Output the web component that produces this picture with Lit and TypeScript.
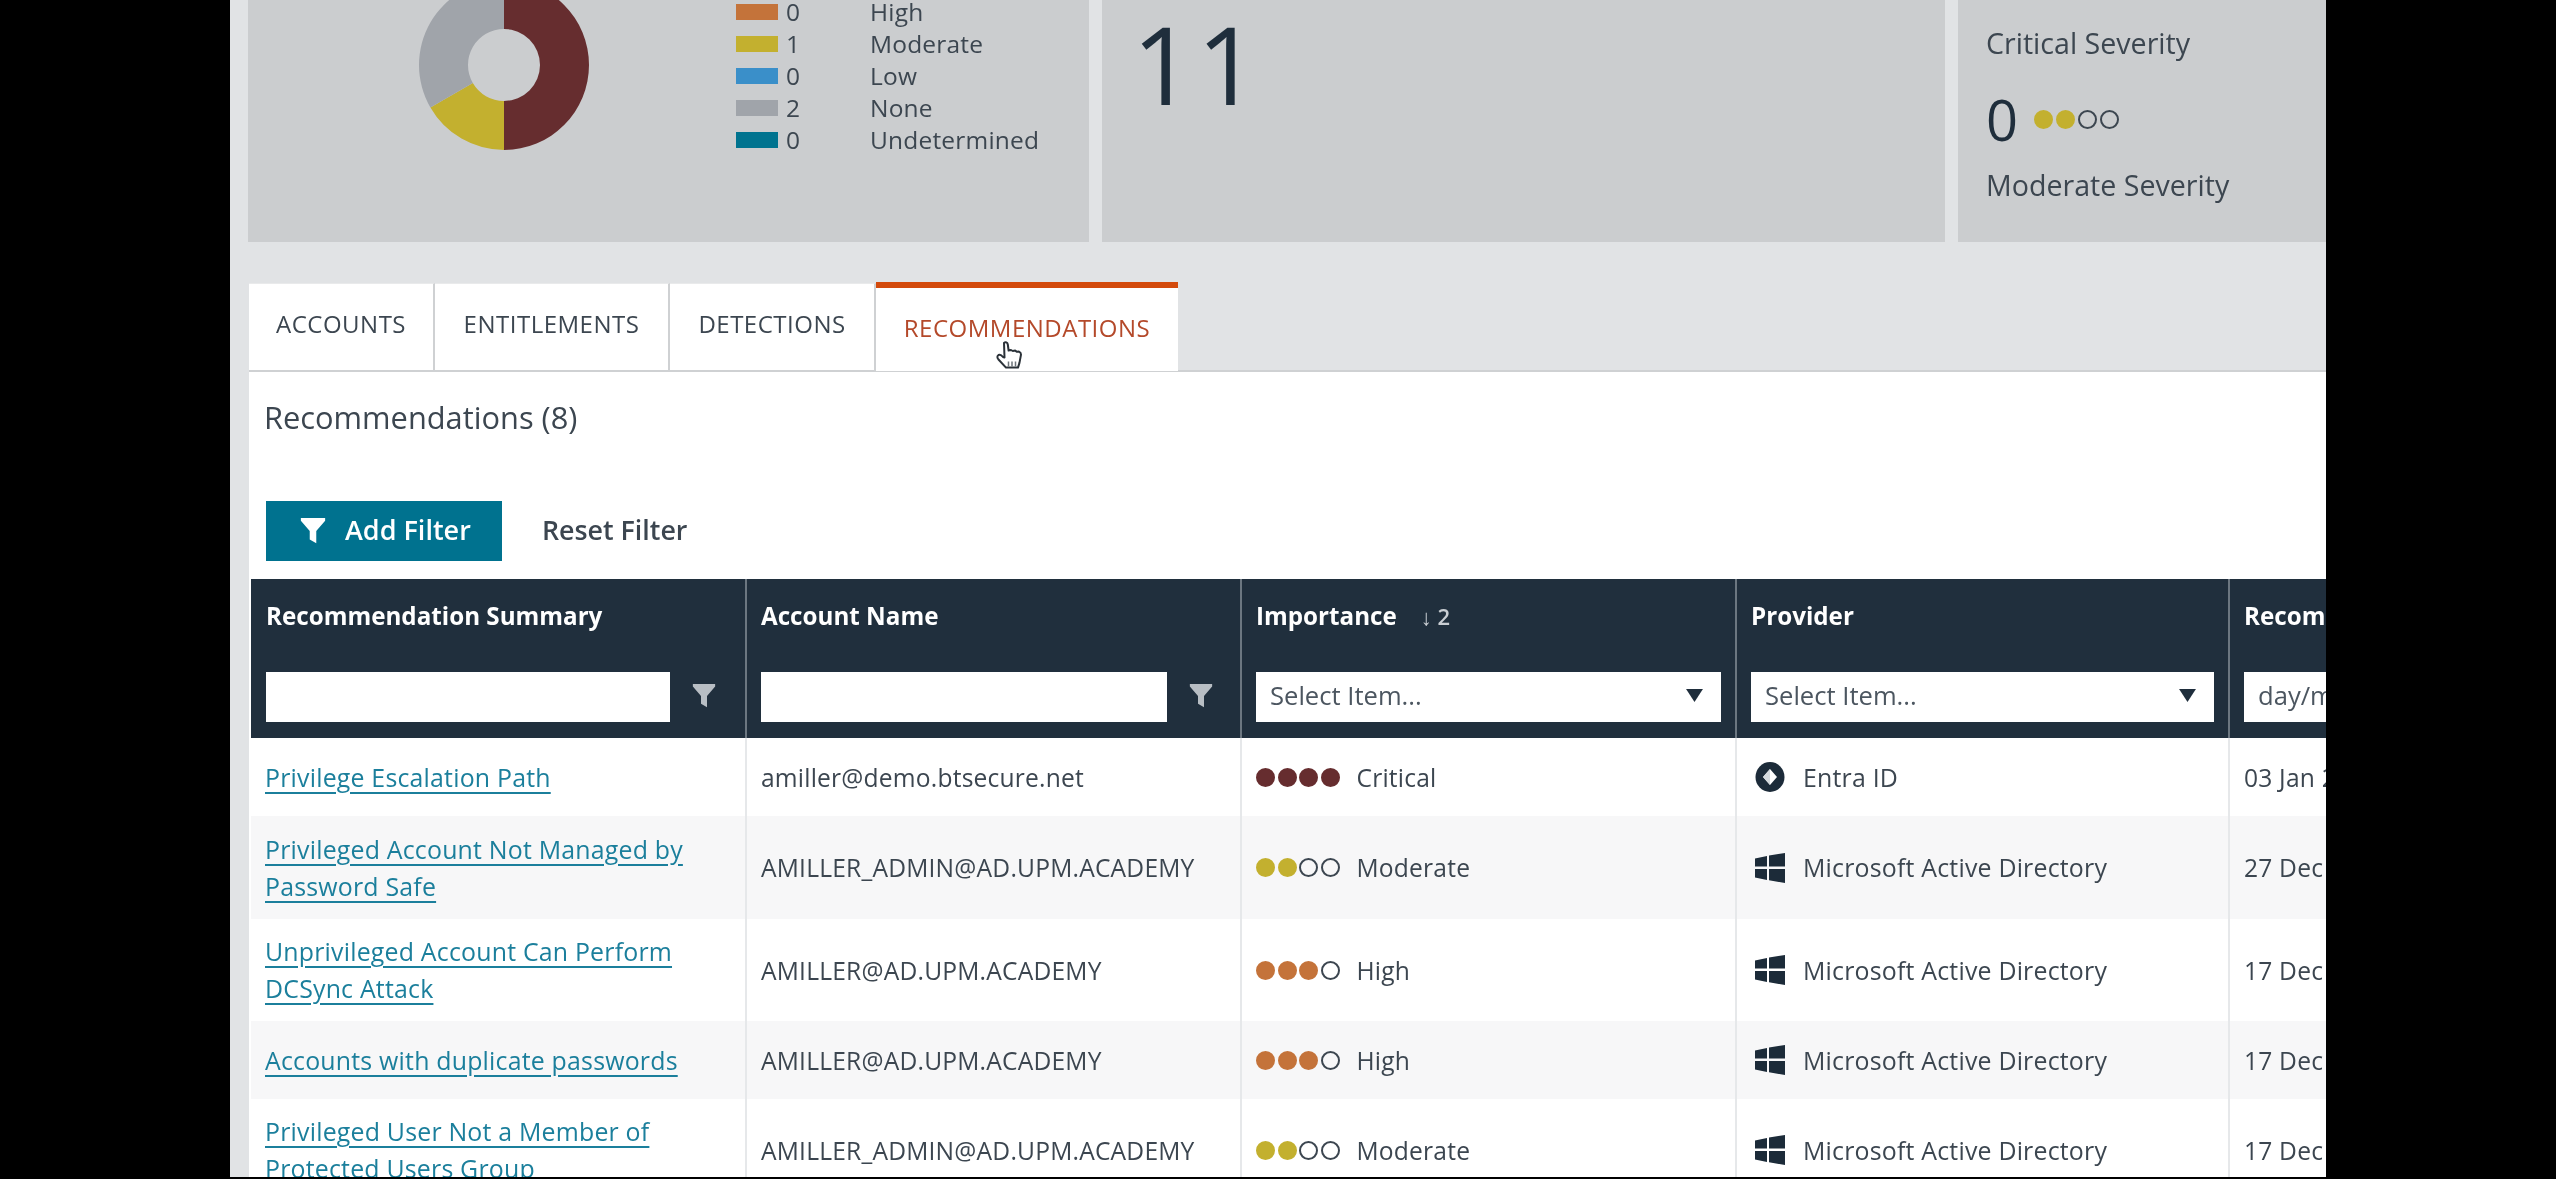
import { LitElement, html, css, svg } from "lit";
import { customElement } from "lit/decorators.js";

type Sev = "critical" | "high" | "moderate";
const SEV: Record<Sev, { n: number; label: string }> = {
  critical: { n: 4, label: "Critical" },
  high: { n: 3, label: "High" },
  moderate: { n: 2, label: "Moderate" },
};

const LEGEND = [
  { c: "#c4733a", n: 0, l: "High" },
  { c: "#c3b02f", n: 1, l: "Moderate" },
  { c: "#3a8fc9", n: 0, l: "Low" },
  { c: "#a0a4aa", n: 2, l: "None" },
  { c: "#00738f", n: 0, l: "Undetermined" },
];

const ROWS: { link: string[]; acct: string; sev: Sev; entra?: boolean; prov: string; date: string }[] = [
  { link: ["Privilege Escalation Path"], acct: "amiller@demo.btsecure.net", sev: "critical", entra: true, prov: "Entra ID", date: "03 Jan 2024" },
  { link: ["Privileged Account Not Managed by", "Password Safe"], acct: "AMILLER_ADMIN@AD.UPM.ACADEMY", sev: "moderate", prov: "Microsoft Active Directory", date: "27 Dec 2023" },
  { link: ["Unprivileged Account Can Perform", "DCSync Attack"], acct: "AMILLER@AD.UPM.ACADEMY", sev: "high", prov: "Microsoft Active Directory", date: "17 Dec 2023" },
  { link: ["Accounts with duplicate passwords"], acct: "AMILLER@AD.UPM.ACADEMY", sev: "high", prov: "Microsoft Active Directory", date: "17 Dec 2023" },
  { link: ["Privileged User Not a Member of", "Protected Users Group"], acct: "AMILLER_ADMIN@AD.UPM.ACADEMY", sev: "moderate", prov: "Microsoft Active Directory", date: "17 Dec 2023" },
];

const funnel = (cls: string) => html`<svg class=${cls} viewBox="0 0 28 30"><path d="M1 1h26v3L17.500 15v13l-7-4V15L1 4z" fill="currentColor"/></svg>`;
const caret = html`<svg class="caret" viewBox="0 0 20 16"><path d="M1 1h18L10 15z" fill="#1f2e3c"/></svg>`;
const win = html`<svg class="pico" viewBox="0 0 30 30"><path d="M0 5.500l12-2.500v10.500H0zM14 2.500L30 0v13.500H14zM0 16h12v11L0 24.500zM14 16h16v14l-16-2.700z" fill="#1c2b39"/></svg>`;
const entra = html`<svg class="pico" viewBox="0 0 30 30"><ellipse cx="15" cy="15" rx="14.500" ry="15" fill="#1c2b39"/><path d="M15 7l7 8-7 8-7-8z" fill="#fff"/><path d="M15 7v16l-7-8z" fill="#d5dade"/></svg>`;

function dots(sev: Sev) {
  const { n } = SEV[sev];
  return html`<span class="dots ${sev}">${[0, 1, 2, 3].map((i) => html`<i class=${i < n ? "on" : ""}></i>`)}</span>`;
}

function arc(a0: number, a1: number, color: string) {
  const r = 85, q = 36, cx = 85, cy = 65;
  const p = (rad: number, a: number) => {
    const t = (a * Math.PI) / 180;
    return `${(cx + rad * Math.sin(t)).toFixed(2)} ${(cy - rad * Math.cos(t)).toFixed(2)}`;
  };
  const large = a1 - a0 > 180 ? 1 : 0;
  return svg`<path fill=${color} d="M${p(r, a0)}A${r} ${r} 0 ${large} 1 ${p(r, a1)}L${p(q, a1)}A${q} ${q} 0 ${large} 0 ${p(q, a0)}Z"/>`;
}

@customElement("app-root")
export class AppRoot extends LitElement {
  static styles = css`
    :host { display: block; width: 2556px; height: 1179px; background: #000; overflow: hidden;
      font-family: "Open Sans", "Noto Sans", sans-serif; color: #3c4650; }
    .frame { margin-left: 230px; width: 2096px; height: 1177px; background: #e1e3e5; overflow: hidden; position: relative; filter: blur(0.7px); }
    .cards { display: flex; gap: 13px; padding-left: 18px; height: 242px; }
    .card { background: #cbcdcf; height: 242px; flex: none; overflow: hidden; }
    .c1 { width: 841px; display: flex; }
    .donut { width: 170px; height: 150px; margin-left: 171px; flex: none; display: block; }
    .legend { margin: -4px 0 0 147px; display: grid; grid-template-columns: 42px 92px auto; grid-auto-rows: 32px; align-items: center; font-size: 24.500px; line-height: 32px; letter-spacing: 0.2px; }
    .sw { width: 42px; height: 16px; margin-top: 0; }
    .num { padding-left: 8px; }
    .c2 { width: 843px; padding-left: 30px; box-sizing: border-box; }
    .big { font-size: 108px; font-weight: 400; line-height: 1; color: #1f2e3c; margin-top: 10px; letter-spacing: 3px; }
    .c3 { width: 369px; padding: 26px 0 0 28px; box-sizing: border-box; font-size: 28.600px; }
    .sevtxt { line-height: 34px; white-space: nowrap; }
    .zero { display: flex; align-items: center; gap: 16px; margin-top: 31px; height: 56px; font-size: 56px; font-weight: 400; color: #1f2e3c; }
    .zero .dots { gap: 3px; }
    .sevtxt.m { margin-top: 21px; }
    .tabs { display: flex; margin: 41px 0 0 19px; height: 89px; box-sizing: border-box; border-bottom: 2px solid #cfd1d3; }
    .tab { background: #fff; height: 87px; box-sizing: border-box; border-right: 2px solid #cfd1d3; border-top: 1px solid #e9eaeb; display: flex; align-items: center; justify-content: center; font-size: 24px; letter-spacing: 0.5px; color: #3c4650; padding-bottom: 7px; }
    .t1 { width: 186px; } .t2 { width: 235px; } .t3 { width: 206px; }
    .t4 { width: 302px; height: 89px; margin-top: -1px; border-top: 6px solid #d34a0c; border-right: none; color: #b4492a; padding-top: 0; padding-bottom: 4px; }
    .panel { margin-left: 19px; background: #fff; height: 806px; overflow: hidden; }
    .title { font-size: 30.800px; line-height: 40px; padding: 25px 0 0 15px; color: #3c4650; }
    .actions { display: flex; align-items: center; margin: 64px 0 0 17px; height: 60px; }
    .btn { width: 236px; height: 60px; background: #00728f; color: #fff; display: flex; align-items: center; gap: 18px; font-size: 27px; font-weight: 600; box-sizing: border-box; padding: 0 0 3px 33px; }
    .btn .fi { width: 28px; height: 28px; flex: none; margin-top: 3px; }
    .reset { margin-left: 40px; font-size: 26.800px; font-weight: 600; color: #3c4650; padding-bottom: 3px; }
    table { border-collapse: collapse; table-layout: fixed; width: 1980px; margin: 18px 0 0 2px; }
    col.a { width: 495px; } col.b { width: 495px; } col.c { width: 495px; } col.d { width: 493px; } col.e { width: 400px; }
    thead th { background: #202f3d; padding: 0; height: 159px; border-left: 2px solid #6c7781; box-sizing: border-box; vertical-align: top; text-align: left; color: #fff; }
    thead th:first-child { border-left: none; padding-left: 15px; }
    .hinner { padding: 0 14px; }
    th:first-child .hinner { padding-left: 0; }
    .hl { display: flex; align-items: center; gap: 24px; height: 37px; margin-top: 18px; font-size: 24.200px; font-weight: 700; white-space: nowrap; }
    .sort { font-weight: 600; font-size: 22px; color: #c9ced3; }
    .fr { display: flex; align-items: center; margin-top: 38px; height: 50px; }
    .in { background: #fff; height: 50px; box-sizing: border-box; font-size: 25.600px; font-weight: 400; color: #4c5660; display: flex; align-items: center; justify-content: space-between; padding: 0 14px 3px; white-space: nowrap; overflow: hidden; }
    .w1 { width: 404px; } .w2 { width: 406px; } .w3 { width: 465px; } .w4 { width: 464px; } .w5 { width: 300px; justify-content: flex-start; }
    .ff { width: 24px; height: 26px; color: #b8bec4; margin: -2px 0 0 22px; flex: none; }
    .caret { width: 19px; height: 15px; flex: none; margin-right: 3px; }
    tbody td { height: 78px; padding: 14px; box-sizing: border-box; border-left: 2px solid #e6e8ea; font-size: 24.600px; line-height: 37px; color: #3c4650; vertical-align: middle; letter-spacing: 0.2px; white-space: nowrap; overflow: hidden; }
    tbody td:first-child { border-left: none; }
    tbody tr:nth-child(2) td { height: 103px; }
    tbody tr:nth-child(even) td { background: #f7f7f8; }
    a { color: #1b7f9c; font-size: 24.900px; text-decoration: underline; text-underline-offset: 5px; display: block; white-space: nowrap; }
    .cell { display: flex; align-items: center; }
    .dots { display: inline-flex; gap: 2.500px; flex: none; }
    .dots i { width: 19px; height: 19px; border-radius: 50%; box-sizing: border-box; border: 2px solid #3c4650; display: block; }
    .critical i.on { background: #662d2f; border-color: #662d2f; }
    .high i.on { background: #c4733a; border-color: #c4733a; }
    .moderate i.on { background: #c3b02f; border-color: #c3b02f; }
    .cell .dots { margin-right: 17px; }
    .pico { width: 30px; height: 30px; margin: 0 18px 0 4px; flex: none; }
    .prov { font-size: 24.900px; }
    .cursor { position: absolute; left: 765px; top: 340px; width: 28px; height: 31px; }
  `;

  render() {
    return html`<div class="frame">
      <div class="cards">
        <div class="card c1">
          <svg class="donut" viewBox="0 0 170 150">
            ${arc(0, 180, "#662d2f")}${arc(180, 240, "#c3b02f")}${arc(240, 360, "#a0a4aa")}
          </svg>
          <div class="legend">
            ${LEGEND.map((r) => html`<span class="sw" style="background:${r.c}"></span><span class="num">${r.n}</span><span>${r.l}</span>`)}
          </div>
        </div>
        <div class="card c2"><div class="big">11</div></div>
        <div class="card c3">
          <div class="sevtxt">Critical Severity</div>
          <div class="zero"><span>0</span>${dots("moderate")}</div>
          <div class="sevtxt m">Moderate Severity</div>
        </div>
      </div>
      <div class="tabs">
        <div class="tab t1">ACCOUNTS</div>
        <div class="tab t2">ENTITLEMENTS</div>
        <div class="tab t3">DETECTIONS</div>
        <div class="tab t4">RECOMMENDATIONS</div>
      </div>
      <div class="panel">
        <div class="title">Recommendations (8)</div>
        <div class="actions">
          <div class="btn">${funnel("fi")}<span>Add Filter</span></div>
          <div class="reset">Reset Filter</div>
        </div>
        <table>
          <colgroup><col class="a"/><col class="b"/><col class="c"/><col class="d"/><col class="e"/></colgroup>
          <thead><tr>
            <th><div class="hinner"><div class="hl">Recommendation Summary</div><div class="fr"><div class="in w1"></div>${funnel("ff")}</div></div></th>
            <th><div class="hinner"><div class="hl">Account Name</div><div class="fr"><div class="in w2"></div>${funnel("ff")}</div></div></th>
            <th><div class="hinner"><div class="hl">Importance <span class="sort">↓ 2</span></div><div class="fr"><div class="in w3"><span>Select Item...</span>${caret}</div></div></div></th>
            <th><div class="hinner"><div class="hl">Provider</div><div class="fr"><div class="in w4"><span>Select Item...</span>${caret}</div></div></div></th>
            <th><div class="hinner"><div class="hl">Recommendation Date</div><div class="fr"><div class="in w5"><span>day/month/year</span></div></div></div></th>
          </tr></thead>
          <tbody>
            ${ROWS.map((r) => html`<tr>
              <td><a href="#">${r.link[0]}</a>${r.link[1] ? html`<a href="#">${r.link[1]}</a>` : ""}</td>
              <td>${r.acct}</td>
              <td><div class="cell">${dots(r.sev)}<span>${SEV[r.sev].label}</span></div></td>
              <td><div class="cell">${r.entra ? entra : win}<span class="prov">${r.prov}</span></div></td>
              <td>${r.date}</td>
            </tr>`)}
          </tbody>
        </table>
      </div>
      <svg class="cursor" viewBox="0 0 28 30">
        <path d="M9 2.500c1.500-1.500 3.500-.5 3.800 1.500l.8 6 2.400-.5 1.800 1 2.400-.4 1.800 1.200 2-.2c1.300.5 2 1.500 2 3l-1.500 8-1.500 5H11L3.500 19c-1.500-2-1.500-3.500 0-4.500 1.500-.8 3 0 4.500 2L9.500 17z" fill="#fff" stroke="#2a3138" stroke-width="2" stroke-linejoin="round"/>
        <path d="M13.500 21v5M17 21v5M20.500 21v5" stroke="#6b7278" stroke-width="1.500"/>
      </svg>
    </div>`;
  }
}
